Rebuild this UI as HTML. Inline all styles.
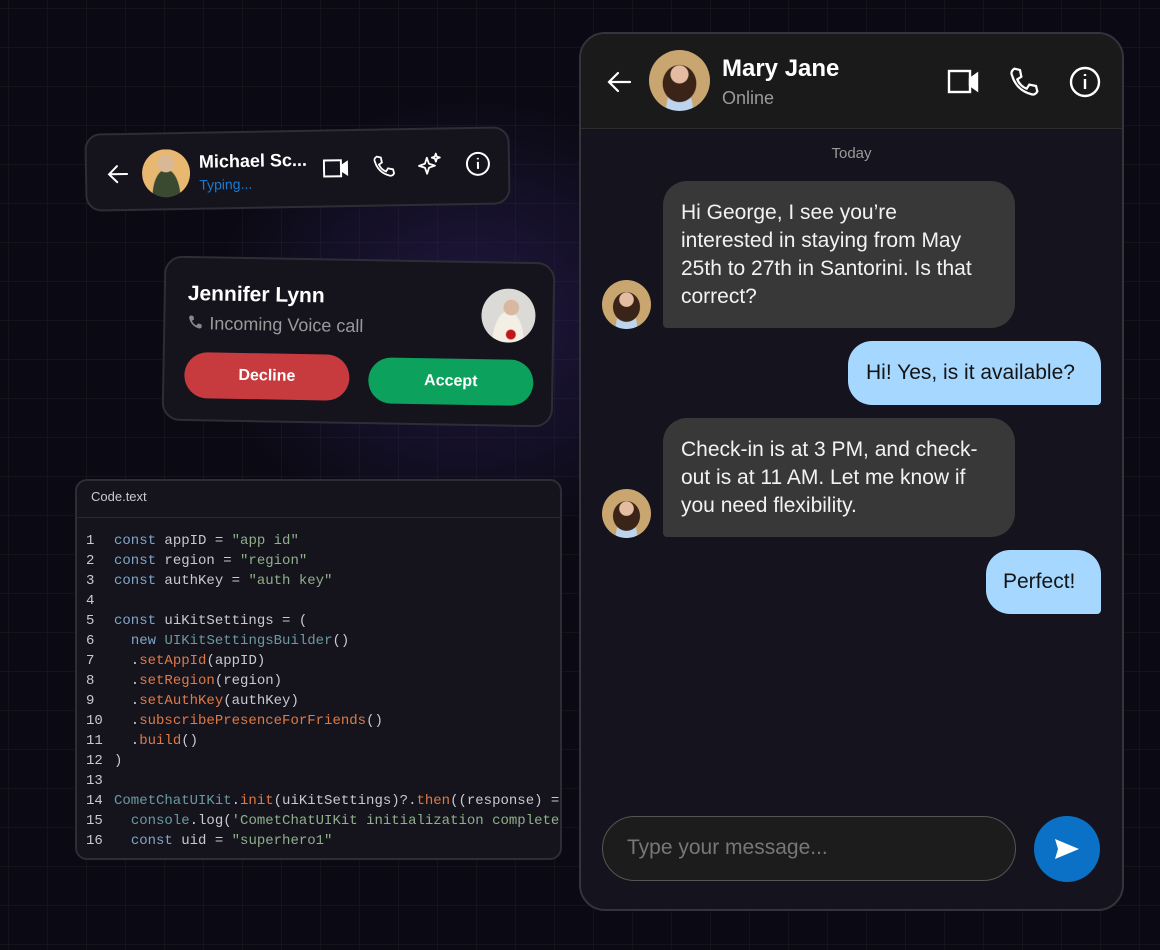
<!DOCTYPE html>
<html><head><meta charset="utf-8"><style>
*{margin:0;padding:0;box-sizing:border-box}
body{width:1160px;height:950px;overflow:hidden;background:#0b0a14;font-family:"Liberation Sans",sans-serif;position:relative;color:#fff}
.bg{position:absolute;inset:0;background:
radial-gradient(ellipse 260px 220px at 470px 320px,rgba(60,40,120,.45),transparent),
linear-gradient(rgba(255,255,255,.035) 1px,transparent 1px) 0 8px/39px 39px,
linear-gradient(90deg,rgba(255,255,255,.035) 1px,transparent 1px) 8px 0/39px 39px;}
.card{position:absolute;background:#15141d;border:2px solid #2e2d36;border-radius:18px}
.av{position:absolute;border-radius:50%;overflow:hidden}
.panel{position:absolute;left:579px;top:32px;width:545px;height:879px;background:#15141e;border:2px solid #35343c;border-radius:26px;overflow:hidden}
.hdr{position:absolute;left:0;top:0;width:100%;height:95px;background:#1a1a1a;border-bottom:1px solid #2c2c2c}
.b{position:absolute;border-radius:24px;font-size:21px;line-height:28px;padding:18px 18px}
.bl{background:#383838;color:#f2f2f2;padding-right:30px}
.br{background:#a6d7ff;color:#141414;border-radius:24px 24px 4px 24px}
.code{position:absolute;left:75px;top:479px;width:487px;height:381px;background:#15141d;border:2px solid #2e2d36;border-radius:12px;overflow:hidden}
.code pre{position:absolute;top:50px;font-family:"Liberation Mono",monospace;font-size:14px;line-height:20px;color:#c9c9cf;white-space:pre}
.k{color:#7ea6c8}.s{color:#8fb08a}.f{color:#e07a45}.c{color:#6a9aa0}
</style></head><body>
<div class="bg"></div>

<!-- Michael card -->
<div class="card" style="left:85px;top:130px;width:425px;height:78px;transform:rotate(-1deg);border-radius:16px">
  <svg style="position:absolute;left:20px;top:28px" width="22" height="22" viewBox="0 0 22 22" fill="none" stroke="#fff" stroke-width="2" stroke-linecap="round"><path d="M20 11H3M10 3L2 11l8 8"/></svg>
  <div class="av" style="left:55px;top:15px;width:48px;height:48px;background:radial-gradient(circle at 50% 30%,#d8b895 20%,transparent 22%),radial-gradient(ellipse at 50% 100%,#3a4a30 40%,transparent 42%),#e8b870"></div>
  <div style="position:absolute;left:112px;top:18px;font-size:18px;font-weight:bold;color:#fff">Michael Sc...</div>
  <div style="position:absolute;left:112px;top:43px;font-size:14px;color:#1a7bd0">Typing...</div>
  <svg style="position:absolute;left:236px;top:26px" width="26" height="22" viewBox="0 0 26 22" fill="none" stroke="#fff" stroke-width="2"><rect x="1" y="3" width="17" height="16"/><path d="M18 9l6-4v12l-6-4z" fill="#fff"/></svg>
  <svg style="position:absolute;left:285px;top:24px" width="24" height="24" viewBox="0 0 24 24" fill="none" stroke="#fff" stroke-width="1.8"><path d="M5 2l4 1 1 5-3 2c1 3 4 6 7 7l2-3 5 1 1 4c-1 2-3 3-5 2C10 19 5 14 3 7 2 5 3 3 5 2z"/></svg>
  <svg style="position:absolute;left:330px;top:22px" width="26" height="26" viewBox="0 0 26 26" fill="none" stroke="#fff" stroke-width="1.8" stroke-linejoin="round"><path d="M10 6l2 6 6 2-6 2-2 6-2-6-6-2 6-2z"/><path d="M19 2l1 3 3 1-3 1-1 3-1-3-3-1 3-1z"/></svg>
  <svg style="position:absolute;left:378px;top:22px" width="26" height="26" viewBox="0 0 26 26" fill="none" stroke="#fff" stroke-width="2"><circle cx="13" cy="13" r="11"/><path d="M13 11v7M13 7v1.5"/></svg>
</div>

<!-- Jennifer card -->
<div class="card" style="left:163px;top:259px;width:391px;height:165px;transform:rotate(1deg)">
  <div style="position:absolute;left:22px;top:24px;font-size:21px;font-weight:bold">Jennifer Lynn</div>
  <svg style="position:absolute;left:22px;top:56px" width="16" height="16" viewBox="0 0 24 24" fill="#888"><path d="M5 2l4 1 1 5-3 2c1 3 4 6 7 7l2-3 5 1 1 4c-1 2-3 3-5 2C10 19 5 14 3 7 2 5 3 3 5 2z"/></svg>
  <div style="position:absolute;left:44px;top:55px;font-size:18px;color:#9a9a9a">Incoming Voice call</div>
  <div class="av" style="left:316px;top:25px;width:54px;height:54px;background:radial-gradient(circle at 55% 35%,#d9b8a0 16%,transparent 18%),radial-gradient(circle at 55% 85%,#c01818 8%,transparent 10%),radial-gradient(ellipse at 50% 100%,#f4efe4 40%,transparent 42%),#dcdad6"></div>
  <div style="position:absolute;left:20px;top:94px;width:165px;height:46px;border-radius:23px;background:#c73b3f;text-align:center;line-height:46px;font-size:16px;font-weight:bold">Decline</div>
  <div style="position:absolute;left:204px;top:96px;width:165px;height:46px;border-radius:23px;background:#0ca15c;text-align:center;line-height:46px;font-size:16px;font-weight:bold">Accept</div>
</div>

<!-- Code -->
<div class="code">
  <div style="position:absolute;left:0;top:0;width:100%;height:37px;border-bottom:1px solid #2b2a33;padding:8px 14px;font-size:13px;color:#c9c9cf">Code.text</div>
<pre style="left:9px">1
2
3
4
5
6
7
8
9
10
11
12
13
14
15
16</pre>
<pre style="left:37px"><span class="k">const</span> appID = <span class="s">"app id"</span>
<span class="k">const</span> region = <span class="s">"region"</span>
<span class="k">const</span> authKey = <span class="s">"auth key"</span>

<span class="k">const</span> uiKitSettings = (
  <span class="k">new</span> <span class="c">UIKitSettingsBuilder</span>()
  .<span class="f">setAppId</span>(appID)
  .<span class="f">setRegion</span>(region)
  .<span class="f">setAuthKey</span>(authKey)
  .<span class="f">subscribePresenceForFriends</span>()
  .<span class="f">build</span>()
)

<span class="c">CometChatUIKit</span>.<span class="f">init</span>(uiKitSettings)?.<span class="f">then</span>((response) =&gt;
  <span class="c">console</span>.log(<span class="s">'CometChatUIKit initialization completed'</span>
  <span class="k">const</span> uid = <span class="s">"superhero1"</span></pre>
</div>

<!-- Main chat -->
<div class="panel">
  <div class="hdr">
    <svg style="position:absolute;left:25px;top:35px" width="26" height="26" viewBox="0 0 26 26" fill="none" stroke="#fff" stroke-width="2.2" stroke-linecap="round"><path d="M24 13H3M12 4l-9 9 9 9"/></svg>
    <div class="av" style="left:68px;top:16px;width:61px;height:61px;background:radial-gradient(circle at 50% 40%,#e4bca2 18%,transparent 20%),radial-gradient(ellipse at 50% 55%,#3a2418 38%,transparent 40%),radial-gradient(ellipse at 50% 100%,#bcd4ec 30%,transparent 32%),#c9a670"></div>
    <div style="position:absolute;left:141px;top:21px;font-size:24px;font-weight:bold;color:#fff">Mary Jane</div>
    <div style="position:absolute;left:141px;top:54px;font-size:18px;color:#9a9a9a">Online</div>
    <svg style="position:absolute;left:366px;top:34px" width="32" height="28" viewBox="0 0 32 28" fill="none" stroke="#fff" stroke-width="2.4"><rect x="2" y="3" width="21" height="21"/><path d="M23 11l7-5v16l-7-5z" fill="#fff"/></svg>
    <svg style="position:absolute;left:427px;top:32px" width="32" height="32" viewBox="0 0 24 24" fill="none" stroke="#fff" stroke-width="1.7"><path d="M5 2l4 1 1 5-3 2c1 3 4 6 7 7l2-3 5 1 1 4c-1 2-3 3-5 2C10 19 5 14 3 7 2 5 3 3 5 2z"/></svg>
    <svg style="position:absolute;left:488px;top:32px" width="32" height="32" viewBox="0 0 32 32" fill="none" stroke="#fff" stroke-width="2.4"><circle cx="16" cy="16" r="14"/><path d="M16 13v10M16 8v2"/></svg>
  </div>
  <div style="position:absolute;left:0;width:100%;top:111px;text-align:center;font-size:15px;color:#9a9a9a">Today</div>

  <div class="av" style="left:21px;top:246px;width:49px;height:49px;background:radial-gradient(circle at 50% 40%,#e4bca2 18%,transparent 20%),radial-gradient(ellipse at 50% 55%,#3a2418 38%,transparent 40%),radial-gradient(ellipse at 50% 100%,#bcd4ec 30%,transparent 32%),#c9a670"></div>
  <div class="b bl" style="left:82px;top:147px;width:352px;height:147px;border-radius:24px 24px 24px 4px">Hi George, I see you’re interested in staying from May 25th to 27th in Santorini. Is that correct?</div>
  <div class="b br" style="left:267px;top:307px;width:253px;height:64px;padding:18px">Hi! Yes, is it available?</div>
  <div class="av" style="left:21px;top:455px;width:49px;height:49px;background:radial-gradient(circle at 50% 40%,#e4bca2 18%,transparent 20%),radial-gradient(ellipse at 50% 55%,#3a2418 38%,transparent 40%),radial-gradient(ellipse at 50% 100%,#bcd4ec 30%,transparent 32%),#c9a670"></div>
  <div class="b bl" style="left:82px;top:384px;width:352px;height:119px;border-radius:24px 24px 24px 4px;padding-right:18px">Check-in is at 3 PM, and check-out is at 11 AM. Let me know if you need flexibility.</div>
  <div class="b br" style="left:405px;top:516px;width:115px;height:64px;padding:18px 17px">Perfect!</div>

  <div style="position:absolute;left:21px;top:782px;width:414px;height:65px;border:1.5px solid #555;border-radius:33px;background:#1c1c1c;padding:0 24px;line-height:62px;font-size:21px;color:#777">Type your message...</div>
  <div style="position:absolute;left:453px;top:782px;width:66px;height:66px;border-radius:50%;background:#0b71c6">
    <svg style="position:absolute;left:20px;top:22px" width="26" height="22" viewBox="0 0 26 22"><path d="M1 1l24 10L1 21l3-10z" fill="#fff"/></svg>
  </div>
</div>
</body></html>
